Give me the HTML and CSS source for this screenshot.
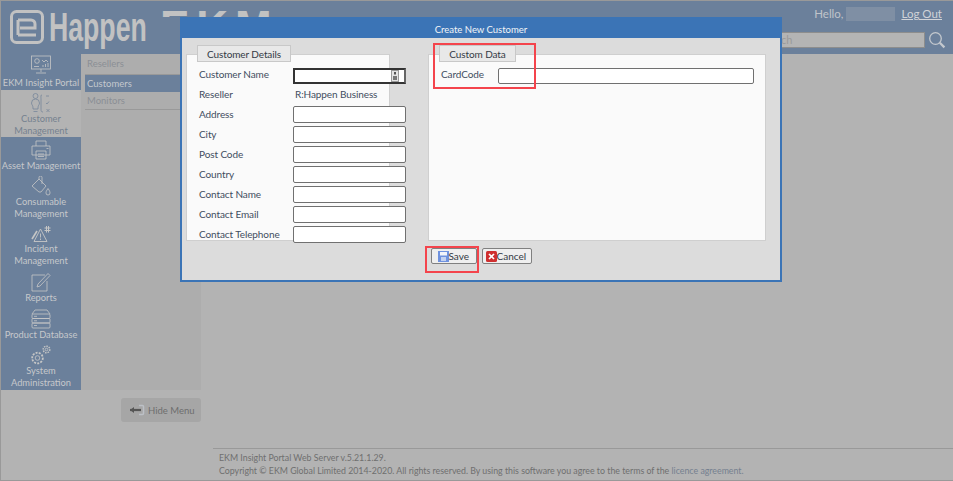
FILE: index.html
```html
<!DOCTYPE html>
<html lang="en">
<head>
<meta charset="utf-8">
<title>Create New Customer</title>
<link rel="stylesheet" href="styles.css">
</head>
<body>
<div class="page">
  <header class="topbar">
    <div class="brand">
      <svg class="brand-mark" viewBox="0 0 34 34" width="34" height="34"><rect x="1.5" y="1.5" width="31" height="31" rx="5" fill="none" stroke="#c2c2c2" stroke-width="3"/><path d="M8 10h13a4 4 0 0 1 4 4v4H10M8 25h18M8 10v15" fill="none" stroke="#c2c2c2" stroke-width="3"/></svg>
      <span class="brand-name">Happen</span>
      <span class="brand-ekm">EKM</span>
    </div>
    <div class="account">
      <div class="hello"><span>Hello,</span><span class="user-mask"></span><a class="logout" href="#">Log Out</a></div>
      <div class="search"><div class="search-box">Search</div>
        <svg viewBox="0 0 18 18" width="18" height="18"><circle cx="7.5" cy="7.5" r="5.8" fill="none" stroke="#c4c8ce" stroke-width="1.3"/><path d="M11.8 11.8l4.6 4.6" stroke="#c4c8ce" stroke-width="2.2"/></svg>
      </div>
    </div>
  </header>
  <div class="main">
    <div class="left">
      <div class="nav-row">
        <nav class="side">
          <a class="side-item h36">
            <svg viewBox="0 0 22 20" width="22" height="20"><g fill="none" stroke="#c6c6c6" stroke-width=".8"><rect x="1.5" y="1" width="19" height="13"/><path d="M11 14v3M6 18h10"/><circle cx="7" cy="6" r="2.300"/><path d="M12 5l2 2 2-2 2 2M13 12v-2M15.500 12V9M18 12V8M4 11.500h5"/></g></svg>
            <span>EKM Insight Portal</span>
          </a>
          <a class="side-item active h47">
            <svg viewBox="0 0 22 20" width="22" height="20"><g fill="none" stroke="#77879b" stroke-width=".8"><circle cx="5.500" cy="3" r="2.500"/><path d="M1.500 10a4 4 0 0 1 8 0c0 2-1.500 2-1.500 5v1H3v-1c0-3-1.500-3-1.500-5zM3.500 18.500h4M12 2c-1.500 0-1 1-1 4v10c0 2 0 3 2 3M16 3h3M16 10l1 1 2-2.500M16.500 16l3 3M19.500 16l-3 3"/></g></svg>
            <span>Customer<br>Management</span>
          </a>
          <a class="side-item h35">
            <svg viewBox="0 0 20 20" width="20" height="20"><g fill="none" stroke="#c6c6c6" stroke-width=".8"><path d="M5 6V1h10v5M1 6h18v9H1zM5 11h10v8H5zM7 14h6M7 16.500h6M15.500 8.500h2"/></g></svg>
            <span>Asset Management</span>
          </a>
          <a class="side-item h48">
            <svg viewBox="0 0 20 20" width="20" height="20"><g fill="none" stroke="#c6c6c6" stroke-width=".8"><path d="M1 10l7-7 7 7-5 6H8zM8 3V1.500a1.500 1.500 0 0 1 3 0V8"/><path d="M17 12.500c-1.800 2.500-2 3.500-2 4.500a2 2 0 0 0 4 0c0-1-.2-2-2-4.500z"/></g></svg>
            <span>Consumable<br>Management</span>
          </a>
          <a class="side-item h47">
            <svg viewBox="0 0 20 18" width="20" height="18"><g fill="none" stroke="#c6c6c6" stroke-width=".9"><path d="M9.500 4L3 16.500h13zM9.500 8.500v4M9.500 13.500V15"/><path d="M1 14l5-8" stroke-width="1.600"/><path d="M13.500 3h6M13.500 5.500h6M15.500 1v6.500M17.500 1v6.500" stroke-width="1"/></g></svg>
            <span>Incident<br>Management</span>
          </a>
          <a class="side-item h37">
            <svg viewBox="0 0 20 20" width="20" height="20"><g fill="none" stroke="#c6c6c6" stroke-width=".8"><path d="M14 3H1v16h15V9"/><path d="M7 12l10-10.500 2 2L9 14l-3 1z"/></g></svg>
            <span>Reports</span>
          </a>
          <a class="side-item h37">
            <svg viewBox="0 0 20 20" width="20" height="20"><g fill="none" stroke="#c6c6c6" stroke-width=".8"><path d="M1 5l3-4h12l3 4"/><rect x="1" y="5" width="18" height="4.500" rx="1"/><rect x="1" y="9.500" width="18" height="4.500" rx="1"/><rect x="1" y="14" width="18" height="5" rx="1"/><path d="M3 7.300h3M3 11.800h3M3 16.500h3"/></g></svg>
            <span>Product Database</span>
          </a>
          <a class="side-item h49">
            <svg viewBox="0 0 20 20" width="20" height="20"><g fill="none" stroke="#c6c6c6" stroke-width=".8"><circle cx="6.500" cy="13" r="2.300"/><circle cx="6.500" cy="13" r="5.300"  stroke-dasharray="2 1.200" stroke-width="1.800"/><circle cx="15.500" cy="4.500" r="1.300"/><circle cx="15.500" cy="4.500" r="3.300" stroke-dasharray="1.500 1" stroke-width="1.500"/></g></svg>
            <span>System<br>Administration</span>
          </a>
        </nav>
        <ul class="subnav">
          <li>Resellers</li>
          <li class="current">Customers</li>
          <li>Monitors</li>
        </ul>
      </div>
      <div class="hide-wrap">
        <button class="hide-btn" type="button">
          <svg viewBox="0 0 16 12" width="16" height="12"><path d="M10 1.500h3.500a1 1 0 0 1 1 1v7a1 1 0 0 1-1 1H10" fill="none" stroke="#bcc0c6" stroke-width="1.500"/><path d="M1 6h11" stroke="#555" stroke-width="2.200"/><path d="M5 3L1 6l4 3z" fill="#555"/></svg>
          Hide Menu
        </button>
      </div>
    </div>
    <div class="content">
      <footer class="foot">
        <div>EKM Insight Portal Web Server v.5.21.1.29.</div>
        <div>Copyright © EKM Global Limited 2014-2020. All rights reserved. By using this software you agree to the terms of the <a href="#">licence agreement.</a></div>
      </footer>
    </div>
  </div>

  <section class="modal">
    <h1 class="modal-title">Create New Customer</h1>
    <div class="modal-body">
      <div class="group group-left">
        <div class="tab">Customer Details</div>
        <div class="panel form">
          <label>Customer Name</label><div class="input focus"><svg viewBox="0 0 8 12" width="8" height="12"><rect x=".5" y=".5" width="7" height="11" fill="#e4e4e4" stroke="#999"/><rect x="3" y="2" width="2" height="2.500" fill="#555"/><rect x="2" y="6" width="4" height="4" fill="#777"/></svg></div>
          <label>Reseller</label><div class="value">R:Happen Business</div>
          <label>Address</label><div class="input"></div>
          <label>City</label><div class="input"></div>
          <label>Post Code</label><div class="input"></div>
          <label>Country</label><div class="input"></div>
          <label>Contact Name</label><div class="input"></div>
          <label>Contact Email</label><div class="input"></div>
          <label>Contact Telephone</label><div class="input"></div>
        </div>
      </div>
      <div class="group group-right">
        <div class="tab">Custom Data</div>
        <div class="panel custom">
          <label>CardCode</label><div class="input"></div>
        </div>
      </div>
    </div>
    <div class="actions">
      <button class="btn" type="button"><svg viewBox="0 0 11 11" width="11" height="11"><rect width="11" height="11" fill="#6f92df"/><rect x="2" y="1" width="7" height="3.500" fill="#f2f4fa"/><rect x="3" y="6" width="5" height="4" fill="#c4d2f0"/></svg>Save</button>
      <button class="btn" type="button"><svg viewBox="0 0 11 11" width="11" height="11"><rect width="11" height="11" rx="1.500" fill="#cf2f2f"/><path d="M3 3l5 5M8 3l-5 5" stroke="#fff" stroke-width="1.700"/></svg>Cancel</button>
    </div>
    <div class="mark mark-tab"></div>
    <div class="mark mark-save"></div>
  </section>
</div>
</body>
</html>
```
FILE: styles.css
```css
* { box-sizing: border-box; }
html, body { margin: 0; height: 100%; }
body { font-family: "Lato", "Open Sans", sans-serif; font-size: 10px; overflow: hidden; background: #b3b3b3; }
.page { position: relative; width: 953px; height: 481px; border: 1px solid #999; border-right: 0; background: #b3b3b3; overflow: hidden; display: flex; flex-direction: column; }

.topbar { height: 53px; background: #6b809b; display: flex; justify-content: space-between; flex: none; }
.brand { display: flex; align-items: flex-start; padding: 9px 0 0 9px; color: #c2c2c2; }
.brand-mark { flex: none; }
.brand-name { display: block; width: 99px; font-family: "Liberation Sans", sans-serif; font-weight: 700; font-size: 41px; line-height: 34px; margin-left: 5px; transform: scaleX(.65); transform-origin: left; white-space: nowrap; }
.brand-ekm { display: block; height: 7px; overflow: hidden; font-family: "Liberation Sans", sans-serif; font-weight: 700; font-size: 44px; line-height: 34px; margin-left: 12px; letter-spacing: 7px; }
.account { width: 170px; padding-top: 5px; margin-right: 7px; color: #c0c4ca; font-size: 11.500px; }
.hello { display: flex; align-items: center; justify-content: flex-end; height: 15px; padding-right: 4px; }
.user-mask { width: 49px; height: 14px; background: #7f8fa4; margin: 0 6px 0 3px; }
.logout { color: #d0d3d8; text-decoration: underline; }
.search { display: flex; align-items: center; justify-content: flex-end; gap: 3px; margin: 10px 0 0 -30px; }
.search svg { flex: none; }
.search-box { width: 185px; height: 16px; flex: none; background: #b4b4b4; border: 1px solid #8d8d8d; color: #9a9a9a; font-size: 11px; line-height: 14px; padding-left: 19px; }

.main { flex: 1; display: flex; min-height: 0; }
.left { width: 200px; flex: none; }
.nav-row { display: flex; height: 336px; background: #adadad; }
.side { width: 80px; flex: none; background: #6b809b; display: flex; flex-direction: column; }
.side-item { display: flex; flex-direction: column; align-items: center; justify-content: flex-end; color: #c6c8cb; font-size: 9.300px; line-height: 12px; text-align: center; white-space: nowrap; }
.side-item svg { flex: none; }
.side-item:first-child, .side-item:last-child { padding-bottom: 1px; }
.side-item:first-child svg { margin-bottom: 2px; }
.side-item.active { background: #b3b3b3; color: #75818f; }
.h35 { height: 35px; } .h36 { height: 36px; } .h37 { height: 37px; } .h47 { height: 47px; } .h48 { height: 48px; } .h49 { height: 49px; }
.subnav { flex: 1; list-style: none; margin: 0; padding: 0 0 0 4px; color: #8b8f95; font-size: 9.500px; }
.subnav li { height: 18px; line-height: 17px; padding-left: 2px; border-bottom: 1px solid #999; }
.subnav li:first-child { height: 21px; line-height: 20px; }
.subnav li.current { background: #6b809b; color: #c4c8ce; border-bottom: 0; height: 17px; }
.hide-wrap { display: flex; justify-content: flex-end; margin-top: 8px; }
.hide-btn { width: 80px; height: 24px; display: flex; align-items: center; justify-content: flex-start; gap: 3px; border: 0; border-radius: 3px; background: #a6a6a6; color: #6e6e6e; font: 9.500px "Lato", sans-serif; padding: 0 0 0 8px; }

.content { flex: 1; display: flex; flex-direction: column; justify-content: flex-end; padding-left: 12px; }
.foot { height: 32px; border-top: 1px solid #999; padding: 2px 0 0 6px; color: #6f6f6f; font-size: 8.800px; line-height: 13px; }
.foot a { color: #75808f; text-decoration: none; }

.modal { position: absolute; left: 179px; top: 16px; width: 602px; height: 265px; border: 2px solid #3b74b6; border-top: 0; background: #dcdcdc; display: flex; flex-direction: column; }
.modal-title { margin: 0 -2px; height: 21px; flex: none; background: #3b74b6; color: #f2f4f8; font-size: 9.500px; font-weight: 400; line-height: 25px; text-align: center; }
.modal-body { display: flex; padding: 7px 0 0 4px; height: 204px; flex: none; }
.group { display: flex; flex-direction: column; height: 196px; }
.group-left { width: 204px; }
.group-right { width: 338px; margin-left: 38px; }
.tab { align-self: flex-start; margin-left: 11px; height: 17px; line-height: 16px; background: #e8e8e8; border: 1px solid #c8c8c8; color: #333a45; font-size: 10px; letter-spacing: -.1px; position: relative; z-index: 1; white-space: nowrap; text-align: center; }
.group-right .tab { width: 77px; }
.group-left .tab { width: 94px; }
.panel { margin-top: -8px; height: 187px; background: #fafafa; border: 1px solid #cfcfcf; }
.form { display: grid; grid-template-columns: 94px 113px; grid-auto-rows: 20px; padding: 11px 0 0 12px; }
.custom { display: flex; align-items: flex-start; padding: 13px 0 0 12px; }
label { height: 17px; line-height: 16px; color: #3f4d60; font-size: 10px; letter-spacing: -.1px; white-space: nowrap; }
.custom label { width: 57px; height: 16px; flex: none; line-height: 13px; }
.value { height: 17px; line-height: 16px; color: #3f4d60; font-size: 10px; letter-spacing: -.1px; white-space: nowrap; padding-left: 2px; }
.input { height: 17px; width: 113px; background: #fff; border: 1px solid #707070; border-radius: 2px; }
.input.focus { height: 16px; margin-top: 2px; border: 2px solid #333; border-right-color: #666; border-radius: 0; display: flex; justify-content: flex-end; align-items: center; padding-right: 5px; }
.custom .input { width: 256px; height: 16px; }
.actions { display: flex; justify-content: center; gap: 5px; margin-top: 6px; }
.btn { height: 16px; display: flex; align-items: center; gap: 0; padding: 0 0 0 6px; background: #efefef; border: 1px solid #808080; border-radius: 2px; color: #333a45; font: 10px "Lato", sans-serif; }
.btn svg { flex: none; }
.btn:first-child { width: 46px; }
.btn:last-child { width: 50px; padding-left: 3px; }
.mark { position: absolute; border: 2px solid #f4444c; }
.mark-tab { left: 251px; top: 26px; width: 103px; height: 46px; }
.mark-save { left: 243px; top: 229px; width: 54px; height: 27px; }
```
